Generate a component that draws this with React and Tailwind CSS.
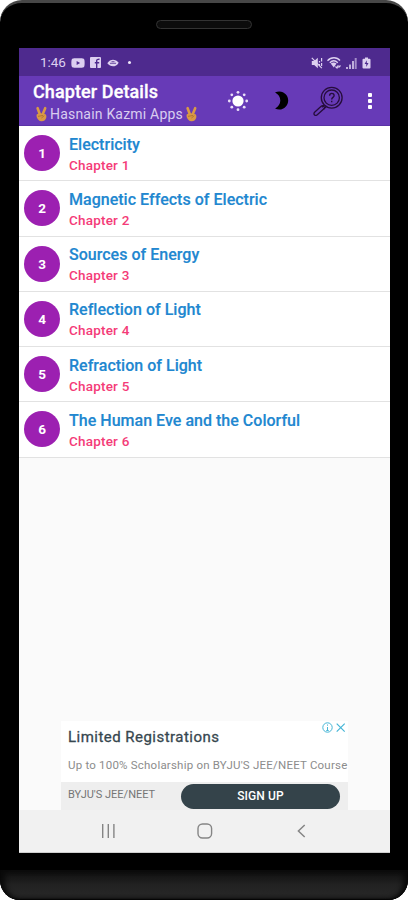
import { FaYoutube } from "react-icons/fa";

const chapters = [
  "Electricity",
  "Magnetic Effects of Electric",
  "Sources of Energy",
  "Reflection of Light",
  "Refraction of Light",
  "The Human Eve and the Colorful",
]

const Peace = () => (
  <svg viewBox="0 0 13 16" className="w-[13px] h-4 shrink-0">
    <g stroke="#d99a45" strokeLinecap="round" fill="none">
      <path d="M4.9 8.5 2.6 2.2" strokeWidth="2.6" />
      <path d="M7.6 8.5 10.2 2.2" strokeWidth="2.6" />
    </g>
    <path d="M1.700 8.400C3 7 9.800 7 11 8.800c.9 1.800.2 4.400-1.500 5.700-1.600 1.200-4.400 1-5.700-.2C2.200 12.700 1 10.200 1.700 8.400Z" fill="#d99a45" />
    <path d="M3.4 10.300 7.600 9.500M6.700 11.800 9 9.900" stroke="#a86c30" strokeWidth=".8" strokeLinecap="round" fill="none" />
  </svg>
)

const StatusBar = () => (
  <div className="h-7 bg-[#4e2a8e] flex items-center pl-[21px] pr-[19px] pt-px text-[#dccff0]">
    <span className="text-[13.5px] w-[27px] tracking-[-0.1px] whitespace-nowrap">1:46</span>
    <FaYoutube className="ml-[4px] w-[14px] h-[14px]" />
    <svg viewBox="0 0 11 11" className="ml-[5px] w-[11px] h-[11px]">
      <rect width="11" height="11" rx="1" fill="currentColor" />
      <path d="M6.700 11V3.800C6.700 2.600 7.600 2.100 9.500 2.200M4.800 5.800H9.200" fill="none" stroke="#4e2a8e" strokeWidth="1.4" />
    </svg>
    <svg viewBox="0 0 12 8" className="ml-[6px] w-3 h-2">
      <path d="M.3 4.300C1.800 1.700 4 .7 6 .7s4.200 1 5.700 3C10.200 6.300 8 7.300 6 7.300S1.800 6.300.3 4.300Z" fill="currentColor" />
      <path d="M3 4.300h6M4.500 2.700h3" stroke="#4e2a8e" strokeWidth=".8" />
    </svg>
    <span className="ml-[9px] w-[3px] h-[3px] rounded-full bg-[#efe8fa]" />
    <div className="ml-auto flex items-center gap-[4px]">
      <svg viewBox="0 0 12 12" className="w-3 h-3">
        <path d="M.8 4h2.400L6.800.8v10.400L3.200 8H.8Z" fill="currentColor" />
        <path d="M.8.8 10.800 11.200M8.500 4v1.500M8.500 7v1.500M10.600 1v3.500M10.600 6v3" stroke="currentColor" strokeWidth="1.2" fill="none" />
      </svg>
      <svg viewBox="0 0 15 12" className="w-[15px] h-3">
        <path d="M.5 3.700C4-.2 10-.2 13 3.500M2.800 5.700c2.500-2.500 5.500-2.500 8 0" stroke="currentColor" strokeWidth="1.3" fill="none" />
        <path d="M3.700 6.500C5.500 5 8 5 9.500 6.500L6.800 10.500Z" fill="currentColor" />
        <path d="M8.500 9.500 10 11l1.300-2.800M11.500 10.500 13.500 8.500" stroke="currentColor" strokeWidth="1.2" fill="none" />
      </svg>
      <svg viewBox="0 0 11 12" className="w-[11px] h-3" fill="currentColor">
        <path d="M0 10h2v2H0zM3 7.500h2V12H3zM6 4h2v8H6z" opacity=".8" />
        <path d="M8.700 1h2v11h-2z" opacity=".6" />
      </svg>
      <svg viewBox="0 0 9 12" className="ml-[1px] w-[9px] h-3">
        <path d="M3 .5h3v1.300h1.500q1 0 1 1v7.700q0 1-1 1h-6q-1 0-1-1V2.800q0-1 1-1H3Z" fill="currentColor" />
        <path d="m4.800 3.300-2.200 3.800h1.700v2.800l2.200-4H4.800Z" fill="#4e2a8e" />
      </svg>
    </div>
  </div>
)

const AppBar = () => (
  <div className="h-[50px] bg-[#673ab7] flex pl-[14px] pr-[18px] text-white border-b border-[#5b33a6]">
    <div className="w-[170px] pt-[5px] whitespace-nowrap">
      <h1 className="text-[18px] leading-[22px] font-medium tracking-[0.1px] [-webkit-text-stroke:0.3px]">Chapter Details</h1>
      <div className="flex items-center pl-[2px] h-[22px] text-[14px] text-[#d9cdf0]">
        <Peace />
        <span className="ml-[2px] w-[135px] tracking-[0.2px]">Hasnain Kazmi Apps</span>
        <Peace />
      </div>
    </div>
    <div className="flex-1 flex items-center">
      <svg viewBox="0 0 22 22" className="ml-[24px] w-[22px] h-[22px]" fill="#fff">
        <circle cx="11" cy="11" r="5.6" />
        <g fill="#eadff8">
          <circle cx="11" cy="2.3" r="1.4" />
          <circle cx="11" cy="19.7" r="1.4" />
          <circle cx="2.3" cy="11" r="1.4" />
          <circle cx="19.7" cy="11" r="1.4" />
          <circle cx="4.8" cy="4.8" r="1.4" />
          <circle cx="17.2" cy="4.8" r="1.4" />
          <circle cx="4.8" cy="17.2" r="1.4" />
          <circle cx="17.2" cy="17.2" r="1.4" />
        </g>
      </svg>
      <svg viewBox="0 0 15 19" className="ml-[25px] w-[15px] h-[19px]">
        <path d="M1 1.500C2.400.8 4 .5 5.300.5c5.200.2 8.900 4.200 8.900 9s-3.800 9-8.900 9.100c-1.500 0-3-.3-4.200-1C4.400 15.600 6.300 13 6.300 9.500S4.400 3.200 1 1.500Z" fill="#000" />
      </svg>
      <svg viewBox="0 0 30 30" className="ml-[24px] w-[30px] h-[30px]" fill="none" stroke="#260d3c" strokeWidth="1.3">
        <circle cx="18.7" cy="11.7" r="10.4" />
        <circle cx="18.7" cy="11.7" r="7.7" />
        <path d="M11 19 8.800 21.200M13 20.800 10.800 23" />
        <path d="M8.200 20.300 1.600 26.200q-1.300 1.500 0 2.700 1.300 1 2.700-.1l6.900-6.300q.7-1-.3-2-1.300-1.300-2.700-.2Z" />
        <path d="M16.600 9.800c0-3.200 4.500-3 4.500-.4 0 1.900-2.400 2-2.400 4M18.700 14.800v1.500" strokeWidth="1.4" />
      </svg>
      <div className="ml-auto flex flex-col gap-[2px]">
        <span className="size-[4px] rounded-[1px] bg-white" />
        <span className="size-[4px] rounded-[1px] bg-white" />
        <span className="size-[4px] rounded-[1px] bg-white" />
      </div>
    </div>
  </div>
)

const Ad = () => (
  <div className="relative ml-[42px] w-[287px] h-[89px] bg-white overflow-hidden flex flex-col whitespace-nowrap">
    <div className="flex-1 pl-[7px] pt-[5px]">
      <div className="text-[15px] leading-[22px] tracking-[0.47px] text-[#37474f] [-webkit-text-stroke:0.3px]">Limited Registrations</div>
      <div className="mt-[8px] text-[11.5px] leading-[18px] tracking-[0.21px] text-[#8c8c8c]">Up to 100% Scholarship on BYJU'S JEE/NEET Course</div>
    </div>
    <div className="h-[28px] bg-[#eeeeee] flex items-center pl-[7px]">
      <span className="w-[113px] pb-[2px] text-[11px] text-[#757575]">BYJU'S JEE/NEET</span>
      <button className="w-[159px] h-[25px] rounded-full bg-[#34434a] text-white text-[12px] font-medium tracking-[0.1px]">SIGN UP</button>
    </div>
    <svg viewBox="0 0 24 11" className="absolute right-[2px] top-[1px] w-6 h-[11px]" fill="none" stroke="#45b5d6">
      <circle cx="5.5" cy="5.5" r="4.7" />
      <path d="M5.500 2.500v1.200M5.500 5v3.500M4.300 8.500h2.400" />
      <path d="m14.700 1.700 8 8m0-8-8 8" strokeWidth="1.2" />
    </svg>
  </div>
)

const NavBar = () => (
  <div className="h-[43px] bg-[#f1f1f1] border-b border-[#cfcfcf] flex items-center text-[#858585]">
    <svg viewBox="0 0 15 14" className="ml-[82px] w-[15px] h-[14px]" stroke="currentColor" strokeWidth="1.4">
      <path d="M1.700 0v14M7.300 0v14M12.900 0v14" />
    </svg>
    <svg viewBox="0 0 16 16" className="ml-[81px] w-4 h-4" fill="none" stroke="currentColor" strokeWidth="1.4">
      <rect x="1" y="1" width="13.6" height="14" rx="4.5" />
    </svg>
    <svg viewBox="0 0 9 14" className="ml-[84px] w-[9px] h-[14px]" fill="none" stroke="currentColor" strokeWidth="1.5">
      <path d="M7.700 1 1.400 7l6.300 6" />
    </svg>
  </div>
)

export default function App() {
  return (
    <div className="w-[408px] h-[900px] bg-white overflow-hidden">
      <div className="h-full rounded-t-[22px] rounded-b-[20px] bg-black flex flex-col font-['Roboto',sans-serif] border-t-[3px] border-[#474747] overflow-hidden">
        <div className="h-[45px] shrink-0 flex justify-center">
          <div className="mt-[17px] w-[96px] h-[9px] rounded-full bg-[#0c0c0c] border border-[#333]" />
        </div>

        <div className="w-[371px] h-[805px] shrink-0 ml-[19px] bg-[#fafafa] flex flex-col">
          <StatusBar />
          <AppBar />
          {chapters.map((title, ind) => {
            return <div key={ind} className="h-[55.25px] bg-white border-b-[1.5px] border-[#e2e2e2] flex items-center pl-[5px]">
              <div className="w-9 h-9 rounded-full bg-[#9c20b1] text-white text-[13.5px] font-bold flex items-center justify-center">{ind + 1}</div>
              <div className="ml-[9px] pt-[3px] whitespace-nowrap">
                <div className="text-[16px] leading-[20px] font-medium tracking-[0.02px] text-[#2187d0] [-webkit-text-stroke:0.15px]">{title}</div>
                <div className="text-[13.5px] leading-[20px] font-medium tracking-[0.2px] text-[#f43b78]">Chapter {ind + 1}</div>
              </div>
            </div>
          })}
          <div className="mt-auto">
            <Ad />
            <NavBar />
          </div>
        </div>

        <div className="mt-[17px] flex-1 bg-linear-to-b from-[#0e0e0e] via-[#222] to-[#282828] rounded-b-[18px] shadow-[inset_0_-1px_1px_#050505,inset_5px_0_5px_#0a0a0a,inset_-5px_0_5px_#0a0a0a]" />
      </div>
    </div>
  );
}
